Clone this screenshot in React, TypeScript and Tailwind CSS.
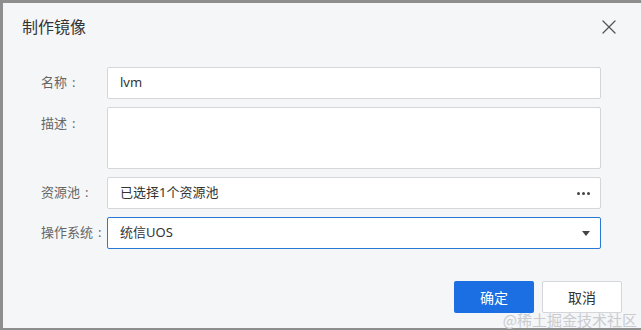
import { X } from "lucide-react";

const FONT = { fontFamily: '"Noto Sans", "Noto Sans CJK SC", sans-serif' };

function Row({ label, children, tall }: { label: string; children: React.ReactNode; tall?: boolean }) {
  return (
    <div className="flex">
      <div
        className={`w-[66px] ml-[38px] text-[13px] text-[#666] flex ${tall ? "items-start pt-[7px]" : "items-center"}`}
      >
        {label}
        <span className="ml-[5px]">:</span>
      </div>
      {children}
    </div>
  );
}

export default function App() {
  return (
    <div className="w-[641px] h-[330px] bg-[#8e8e8e] pl-[3px] pt-[3px] pb-[2px] overflow-hidden" style={FONT}>
      <div className="h-full bg-[#f5f6f8] flex flex-col relative">
        <div className="h-[48px] flex items-center justify-between pl-[19px] pr-[20px]">
          <span className="text-[16px] text-[#333]">制作镜像</span>
          <X size={24} strokeWidth={1.3} className="text-[#555]" />
        </div>
        <div className="mt-[16px] flex flex-col gap-[8px]">
          <Row label="名称">
            <div className="w-[494px] h-[32px] bg-white border border-[#d4d6d9] rounded-[2px] flex items-center pl-[12px] text-[13px] text-[#333]">
              lvm
            </div>
          </Row>
          <Row label="描述" tall>
            <div className="w-[494px] h-[62px] bg-white border border-[#d4d6d9] rounded-[2px]" />
          </Row>
          <Row label="资源池">
            <div className="w-[494px] h-[32px] bg-white border border-[#d4d6d9] rounded-[2px] flex items-center justify-between pl-[12px] pr-[10px] text-[13px] text-[#333]">
              <span>已选择1个资源池</span>
              <span className="flex gap-[2px]">
                <span className="w-[3px] h-[3px] rounded-full bg-[#444]" />
                <span className="w-[3px] h-[3px] rounded-full bg-[#444]" />
                <span className="w-[3px] h-[3px] rounded-full bg-[#444]" />
              </span>
            </div>
          </Row>
          <Row label="操作系统">
            <div className="w-[494px] h-[32px] bg-white border border-[#2a78d6] rounded-[2px] flex items-center justify-between pl-[12px] pr-[10px] text-[13px] text-[#333]">
              <span>统信UOS</span>
              <svg width="8" height="5" viewBox="0 0 8 5">
                <path d="M0 0 L8 0 L4 5 Z" fill="#444" />
              </svg>
            </div>
          </Row>
        </div>
        <div className="mt-[32px] flex justify-end gap-[8px] pr-[19px]">
          <button className="w-[80px] h-[32px] bg-[#1b6fe2] text-white text-[14px] rounded-[2px]">确定</button>
          <button className="w-[80px] h-[32px] bg-white border border-[#d4d6d9] text-[#333] text-[14px] rounded-[2px]">
            取消
          </button>
        </div>
        <span
          className="absolute right-[4px] bottom-[1px] text-[15px] text-[#c9cbce] leading-none"
          style={{ fontFamily: '"Noto Sans CJK SC", serif' }}
        >
          @稀土掘金技术社区
        </span>
      </div>
    </div>
  );
}
